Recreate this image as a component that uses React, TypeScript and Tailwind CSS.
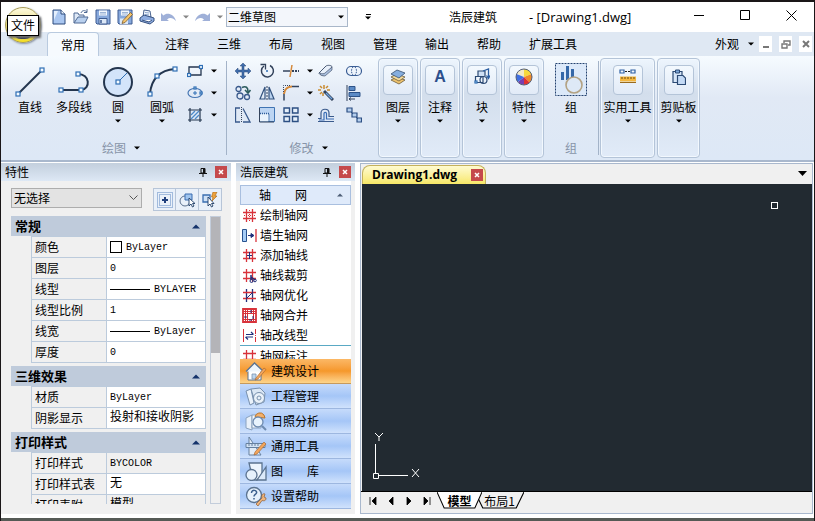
import type { ReactNode } from 'react';
import clsx from 'clsx';

const NAVY = '#24364f';
const BLUE = '#2f6fb5';

const ribbonTabs = ['常用', '插入', '注释', '三维', '布局', '视图', '管理', '输出', '帮助'];

type Row = { name: string; value: string; kind?: 'line' | 'swatch'; readOnly?: boolean };

const sections: { title: string; rows: Row[] }[] = [
  {
    title: '常规',
    rows: [
      { name: '颜色', value: 'ByLayer', kind: 'swatch' },
      { name: '图层', value: '0' },
      { name: '线型', value: 'BYLAYER', kind: 'line' },
      { name: '线型比例', value: '1' },
      { name: '线宽', value: 'ByLayer', kind: 'line' },
      { name: '厚度', value: '0' },
    ],
  },
  {
    title: '三维效果',
    rows: [
      { name: '材质', value: 'ByLayer' },
      { name: '阴影显示', value: '投射和接收阴影' },
    ],
  },
  {
    title: '打印样式',
    rows: [
      { name: '打印样式', value: 'BYCOLOR', readOnly: true },
      { name: '打印样式表', value: '无' },
      { name: '打印表附', value: '模型', readOnly: true },
    ],
  },
];

function Caret({ className }: { className?: string }) {
  return (
    <svg width="6" height="4" viewBox="0 0 6 4" className={clsx('shrink-0', className)} aria-hidden="true">
      <path d="M0 0.5h6L3 3.5z" fill="currentColor" />
    </svg>
  );
}

function Svg({ w = 16, h = 16, children }: { w?: number; h?: number; children: ReactNode }) {
  return (
    <svg width={w} height={h} viewBox={`0 0 ${w} ${h}`} fill="none" className="shrink-0" aria-hidden="true">
      {children}
    </svg>
  );
}

// grip square used on the ends of the draw icons
function Grip({ x, y, s = 4 }: { x: number; y: number; s?: number }) {
  return <rect x={x - s / 2} y={y - s / 2} width={s} height={s} fill="#f4fbff" stroke={BLUE} strokeWidth="1.2" />;
}

/* ---------- quick access ---------- */

const quickIcons = [
  {
    label: '新建',
    icon: (
      <Svg>
        <path d="M2 1h8l4 4v10H2z" fill="#a9c6f0" stroke="#2c4a7c" />
        <path d="M3 2h4L3 11z" fill="#e4effc" />
        <path d="M10 1v4h4" fill="#eaf3fd" stroke="#2c4a7c" />
      </Svg>
    ),
  },
  {
    label: '打开',
    icon: (
      <Svg>
        <path d="M1 14V4h4l1 2h5v2" fill="#dfe9f6" stroke="#516b94" />
        <path d="M1 14l4-6h10l-3 6z" fill="#b9d0ee" stroke="#516b94" />
        <path d="M8 4c1-3 4-3 6-1M14 0v3.5h-3" stroke="#516b94" />
      </Svg>
    ),
  },
  {
    label: '保存',
    icon: (
      <Svg>
        <path d="M1 1h14v14H2l-1-1z" fill="#88a9dc" stroke="#3d5b91" />
        <path d="M4 1.5h8v5H4z" fill="#f2f7fd" />
        <path d="M5 3.5h6M5 5h6" stroke="#9db4d6" />
        <path d="M4 9.5h8V15H4z" fill="#dce8f7" stroke="#3d5b91" />
        <path d="M6 11v3" stroke="#3d5b91" strokeWidth="1.5" />
      </Svg>
    ),
  },
  {
    label: '另存为',
    icon: (
      <Svg>
        <path d="M1 1h14v14H2l-1-1z" fill="#88a9dc" stroke="#3d5b91" />
        <path d="M4 1.5h8v5H4z" fill="#f2f7fd" />
        <path d="M5 3.5h6M5 5h6" stroke="#9db4d6" />
        <path d="M3 9.5h8V15H3z" fill="#dce8f7" />
        <path d="M6 11.5l7.5-8 2 2-7.5 8-3 1z" fill="#f5c46a" stroke="#7b5a2a" strokeWidth=".8" />
      </Svg>
    ),
  },
  {
    label: '打印',
    icon: (
      <Svg>
        <path d="M5 1l6 1 1 6H4z" fill="#f6faff" stroke="#48628f" />
        <path d="M6 3.5l4 .5M6 5.5l4 .5" stroke="#8aa4cc" />
        <path d="M1 9l4-3 10 3v3l-4 3-10-3z" fill="#8fade0" stroke="#35507f" />
        <path d="M3 11l7 2 3-2" fill="#fff" stroke="#35507f" />
      </Svg>
    ),
  },
];

function Undo({ flip }: { flip?: boolean }) {
  return (
    <Svg w={15} h={12}>
      <path
        d={flip ? 'M15 10V2l-2.5 2.5C9 1 2 3 0 10c3-3 6-4 9-1.5L7 10z' : 'M0 10V2l2.5 2.5C6 1 13 3 15 10c-3-3-6-4-9-1.5L8 10z'}
        fill="#9fb0d8"
      />
    </Svg>
  );
}

function TitleBar() {
  return (
    <header className="flex h-8 shrink-0 items-center border-t-2 border-[#1a1618] bg-white pl-[50px]">
      <div className="flex items-center gap-[6px]">
        {quickIcons.map((q) => (
          <button key={q.label} aria-label={q.label} className="flex w-4">
            {q.icon}
          </button>
        ))}
        <button aria-label="撤销" className="flex items-center gap-[7px] text-[#868686]">
          <Undo />
          <Caret />
        </button>
        <button aria-label="重做" className="flex items-center gap-[7px] text-[#868686]">
          <Undo flip />
          <Caret />
        </button>
      </div>
      <div className="relative ml-[3px] w-[122px]">
        <select
          aria-label="工作空间"
          className="block h-5 w-full appearance-none border border-[#a9b7c9] bg-[#f3f6fb] px-px text-[12px] leading-4"
        >
          <option>二维草图</option>
        </select>
        <Caret className="pointer-events-none absolute top-2 right-1" />
      </div>
      <button aria-label="自定义" className="ml-4 flex w-2 flex-col items-center gap-px">
        <span className="h-px w-[5px] bg-black" />
        <Caret />
      </button>
      <h1 className="ml-[77px] flex flex-1 items-center gap-8 text-[12px] whitespace-nowrap">
        <span>浩辰建筑</span>
        <span className="font-['Open_Sans','Noto_Sans_CJK_SC',sans-serif] text-[13px] leading-4">- [Drawing1.dwg]</span>
      </h1>
      <div className="flex h-[26px] self-start">
        <button aria-label="最小化" className="flex w-[46px] items-center justify-center">
          <Svg w={11} h={11}><path d="M0 5.5h10" stroke="#000" /></Svg>
        </button>
        <button aria-label="最大化" className="flex w-[46px] items-center justify-center">
          <Svg w={11} h={11}><path d="M.5.5h9v9h-9z" stroke="#000" /></Svg>
        </button>
        <button aria-label="关闭" className="flex w-[46px] items-center justify-center">
          <Svg w={11} h={11}><path d="M.5.5l10 10M10.5.5l-10 10" stroke="#000" /></Svg>
        </button>
      </div>
    </header>
  );
}

function TabBar() {
  return (
    <nav className="flex h-6 shrink-0 items-center bg-[#dfe8f3] pr-[2px] pl-[46px] text-[12px] leading-6">
      {ribbonTabs.map((t, i) => (
        <button
          key={t}
          className={clsx(
            'h-6 w-[52px] shrink-0',
            i === 0 && 'rounded-t border border-b-0 border-[#b9cadf] bg-[#f6fafe]',
          )}
        >
          {t}
        </button>
      ))}
      <button className="ml-[14px]">扩展工具</button>
      <button className="mr-1 ml-auto flex items-center gap-[9px]">
        外观
        <Caret />
      </button>
      <div className="ml-px flex gap-[7px]">
        <button aria-label="最小化图形" className="flex h-4 w-[13px] items-center justify-center bg-white">
          <Svg w={8} h={8}><path d="M1 7h6" stroke="#777" strokeWidth="2" /></Svg>
        </button>
        <button aria-label="还原图形" className="flex h-4 w-[13px] items-center justify-center bg-white">
          <Svg w={10} h={9}><path d="M3 3V1h6v4H7M1 4h5v4H1z" stroke="#777" strokeWidth="1.4" /></Svg>
        </button>
        <button aria-label="关闭图形" className="flex h-4 w-[13px] items-center justify-center bg-white">
          <Svg w={8} h={8}><path d="M1 1l6 6M7 1L1 7" stroke="#777" strokeWidth="2" /></Svg>
        </button>
      </div>
    </nav>
  );
}

/* ---------- ribbon ---------- */

function BigButton({ label, caret, children }: { label: string; caret?: boolean; children: ReactNode }) {
  return (
    <button className="flex w-11 flex-col items-center">
      <span className="flex h-[35px] items-center">{children}</span>
      <span className="leading-4 whitespace-nowrap">{label}</span>
      {caret && <Caret className="mt-1" />}
    </button>
  );
}

function GroupTitle({ children, caret }: { children: string; caret?: boolean }) {
  return (
    <div className="mt-auto mb-1 flex h-4 items-center justify-center gap-2 leading-4">
      <span className="text-[#8794a8]">{children}</span>
      {caret && <Caret />}
    </div>
  );
}

function SmallButton({ label, caret, children }: { label: string; caret?: boolean; children: ReactNode }) {
  return (
    <button aria-label={label} className="flex h-[22px] items-center gap-2">
      {children}
      {caret && <Caret />}
    </button>
  );
}

function DrawGroup() {
  return (
    <section className="flex w-[225px] shrink-0 flex-col pt-1 pl-[7px]">
      <div className="flex">
        <div className="flex pt-1">
          <BigButton label="直线">
            <Svg w={32} h={32}>
              <path d="M4 28L28 4" stroke={NAVY} strokeWidth="2" />
              <Grip x={4} y={28} />
              <Grip x={28} y={4} />
            </Svg>
          </BigButton>
          <BigButton label="多段线">
            <Svg w={34} h={32}>
              <path d="M4 24h20c10-1 9-16-3-16" stroke={NAVY} strokeWidth="2" />
              <Grip x={4} y={24} />
              <Grip x={24} y={24} />
              <Grip x={21} y={8} />
            </Svg>
          </BigButton>
          <BigButton label="圆" caret>
            <Svg w={32} h={32}>
              <circle cx="16" cy="16" r="14" fill="#d3e4fa" stroke={NAVY} strokeWidth="2" />
              <path d="M16 16l9-9" stroke={BLUE} />
              <Grip x={16} y={16} />
            </Svg>
          </BigButton>
          <BigButton label="圆弧" caret>
            <Svg w={32} h={32}>
              <path d="M4 28C5 13 14 4 29 3" stroke={NAVY} strokeWidth="2" />
              <Grip x={4} y={28} />
              <Grip x={11} y={10} />
              <Grip x={29} y={3} />
            </Svg>
          </BigButton>
        </div>
        <div className="flex flex-col pl-[3px]">
          <SmallButton label="矩形" caret>
            <Svg>
              <path d="M2 4h12v8H2z" stroke={NAVY} strokeWidth="1.3" />
              <Grip x={2} y={12} s={3} />
              <Grip x={14} y={4} s={3} />
            </Svg>
          </SmallButton>
          <SmallButton label="椭圆" caret>
            <Svg>
              <ellipse cx="8" cy="8" rx="7" ry="4.5" stroke="#4777b4" strokeWidth="1.2" />
              <path d="M8 6v4M6 8h4" stroke={BLUE} />
              <Grip x={8} y={3} s={2} />
              <Grip x={14} y={8} s={2} />
            </Svg>
          </SmallButton>
          <SmallButton label="图案填充" caret>
            <Svg>
              <path d="M3 1v14M13 1v14M1 3h14M1 13h14" stroke={NAVY} strokeWidth="1.2" />
              <path d="M4 8l4-4M4 12l8-8M8 12l4-4" stroke="#4b8ac9" strokeWidth="1.3" />
            </Svg>
          </SmallButton>
        </div>
      </div>
      <div className="mt-auto pl-2">
        <GroupTitle caret>绘图</GroupTitle>
      </div>
    </section>
  );
}

const modifyTools: { label: string; caret?: boolean; icon: ReactNode }[] = [
  {
    label: '移动',
    icon: (
      <path d="M8 0l3 3H9v4h4V5l3 3-3 3V9H9v4h2l-3 3-3-3h2V9H3v2L0 8l3-3v2h4V3H5z" fill="#3f6cab" stroke="#2b4a7a" strokeWidth=".5" />
    ),
  },
  {
    label: '旋转',
    icon: (
      <>
        <path d="M5 3a6 6 0 1 0 6-.5" stroke="#33435c" strokeWidth="1.5" />
        <path d="M1.5 1.5h5v5" stroke="#33435c" strokeWidth="1.3" />
        <path d="M8 7v2M7 8h2" stroke={BLUE} />
      </>
    ),
  },
  {
    label: '修剪',
    caret: true,
    icon: (
      <>
        <path d="M0 8h7" stroke="#33435c" strokeWidth="1.5" />
        <path d="M9 8h7" stroke="#33435c" strokeWidth="2" strokeDasharray="2 1" />
        <path d="M9 2L7 14" stroke="#d58a3c" strokeWidth="1.5" />
      </>
    ),
  },
  {
    label: '删除',
    icon: (
      <>
        <path d="M1 10l7-7c1-1 6-1 6 1l-7 8c-1 1-6 0-6-2z" fill="#e9f1fb" stroke="#4a5a74" />
        <path d="M2 10c2 1 4 1 5 0l7-6v3l-7 6c-3 0-5-1-5-3z" fill="#a9bedd" stroke="#4a5a74" strokeWidth=".7" />
      </>
    ),
  },
  {
    label: '合并',
    icon: (
      <>
        <rect x=".5" y="3.5" width="15" height="9" rx="4.5" stroke="#3b5e95" strokeWidth="1.2" />
        <path d="M7 4c-2 2-2 6 0 8M9 4c2 2 2 6 0 8" stroke="#3b5e95" strokeDasharray="1.5 1" />
      </>
    ),
  },
  {
    label: '复制',
    icon: (
      <>
        <circle cx="3.5" cy="4" r="2.5" stroke="#3a5a8c" strokeWidth="1.3" />
        <circle cx="5" cy="11" r="3" stroke="#3a5a8c" strokeWidth="1.3" />
        <circle cx="12" cy="12" r="2.5" stroke="#3a5a8c" strokeWidth="1.3" />
        <path d="M7 2.5c4-2 6 0 6 4M10 5l3 3 2.5-3" stroke="#2b5a5c" strokeWidth="1.6" />
      </>
    ),
  },
  {
    label: '镜像',
    icon: (
      <>
        <path d="M6 2v12H1z" stroke="#33537f" strokeWidth="1.2" />
        <path d="M10 2v12h5z" fill="#b9d2ef" stroke="#33537f" strokeWidth="1.2" />
        <path d="M8 1v14" stroke="#33435c" strokeDasharray="2 1" />
      </>
    ),
  },
  {
    label: '圆角',
    caret: true,
    icon: (
      <>
        <path d="M1 15.5V8M9 1.5h7" stroke="#33435c" strokeWidth="1.5" />
        <path d="M1 9C1.5 4 5 1.5 9 1.5" stroke="#d58a3c" strokeWidth="2" />
        <path d="M.5 7V.5H8" stroke="#33435c" strokeDasharray="1 1" />
      </>
    ),
  },
  {
    label: '分解',
    icon: (
      <>
        <path d="M6 0v4M0 5h3M2 1l2 2M10 1L8 3M2 9l2-2M5 8v3M9 5h3" stroke="#c98a2e" strokeWidth="1.5" />
        <path d="M6 6l9 9" stroke="#33435c" strokeWidth="3" />
        <path d="M8 8l6 6" stroke="#6fa3dd" strokeWidth="1.3" />
      </>
    ),
  },
  {
    label: '对齐',
    icon: (
      <>
        <path d="M1 0v16" stroke="#33435c" />
        <path d="M3 1.5h6v4H3zM3 7.5h11v4H3z" fill="#5c8bc6" stroke="#2d5288" />
        <path d="M3 14h6M5 12.5L3 14l2 1.5" stroke="#33435c" />
      </>
    ),
  },
  {
    label: '拉伸',
    icon: (
      <>
        <path d="M5 1H.5v14H5M8 1.5l7 13.5H8" stroke="#3a5a8c" strokeWidth="1.3" />
        <path d="M6.5 0v16" stroke="#33435c" strokeDasharray="1 1" />
      </>
    ),
  },
  {
    label: '缩放',
    icon: (
      <>
        <path d="M.5.5h15v14H.5z" stroke="#3f74b3" fill="#bcd5f3" />
        <path d="M1 7h8.5v7.5H1z" fill="#e9f3fd" />
        <path d="M1 6.5h9V15" stroke="#2f5c99" strokeWidth="1.3" strokeDasharray="1 1" />
        <path d="M.5 1v14H15" stroke="#33435c" />
      </>
    ),
  },
  {
    label: '阵列',
    caret: true,
    icon: <path d="M1 1h5.5v5H1zM9.5 1H15v5H9.5zM1 9.5h5.5v5H1zM9.5 9.5H15v5H9.5z" fill="#e6f0fb" stroke="#2c4f83" strokeWidth="1.4" />,
  },
  {
    label: '偏移',
    icon: (
      <>
        <path d="M0 14.5h16M0 11.5h3V6c0-5 8-5 8 0v3.5h5" stroke="#3a5a8c" strokeWidth="1.2" />
        <path d="M1 13h5V6.5c0-1.5 2.5-1.5 2.5 0V12H16" stroke="#3a6db5" strokeWidth="1.2" />
      </>
    ),
  },
  {
    label: '拉长',
    icon: (
      <>
        <path d="M1 1h5v4H1zM6 6h5v4H6zM11 11h4.5v4H11z" fill="#b5cfee" stroke="#2c4f83" strokeWidth="1.2" />
        <path d="M5 5l2 2M10 10l2 2" stroke="#2c4f83" />
      </>
    ),
  },
];

function ModifyGroup() {
  return (
    <section className="flex w-[151px] shrink-0 flex-col pt-1">
      <div className="grid grid-cols-[24px_24px_35px_28px_18px] pl-2">
        {modifyTools.map((m) => (
          <SmallButton key={m.label} label={m.label} caret={m.caret}>
            <Svg>{m.icon}</Svg>
          </SmallButton>
        ))}
      </div>
      <div className="mt-auto pl-3">
        <GroupTitle caret>修改</GroupTitle>
      </div>
    </section>
  );
}

function CollapsedGroup({ label, width, children }: { label: string; width: string; children: ReactNode }) {
  return (
    <button
      className={clsx(
        'my-[2px] flex shrink-0 flex-col items-center rounded border border-[#b4c4d8] bg-gradient-to-b from-[#edf5fd] via-[#d3deec] via-35% to-[#e1ebf8] pt-[6px] shadow-[inset_0_0_0_1px_#f2f8fe]',
        width,
      )}
    >
      <span className="flex h-[30px] w-[30px] items-start justify-center rounded-sm border border-[#b4c4d8] bg-gradient-to-b from-[#f3f9fe] to-[#e2ebf7] pt-[2px]">
        {children}
      </span>
      <span className="mt-1 leading-4 whitespace-nowrap">{label}</span>
      <Caret className="mt-1" />
    </button>
  );
}

function Separator() {
  return <div className="my-[5px] w-px shrink-0 bg-[#a3b3c8]" />;
}

function Ribbon() {
  return (
    <div className="flex h-[106px] shrink-0 border-b-2 border-[#a9b8cd] bg-gradient-to-b from-[#f6fbff] via-[#e1e9f5] via-40% to-[#dde8f6] text-[12px]">
      <DrawGroup />
      <Separator />
      <ModifyGroup />
      <div className="flex gap-[2px]">
        <CollapsedGroup label="图层" width="w-10">
          <Svg w={16} h={18}>
            <path d="M1 12l6-3 8 3-6 4z" fill="#f0c46e" stroke="#6a5a3a" strokeWidth=".8" />
            <path d="M1 9l6-3 8 3-6 4z" fill="#f7dc9c" stroke="#6a5a3a" strokeWidth=".8" />
            <path d="M1 6l6-4 8 3-6 5z" fill="#86aede" stroke="#38506f" strokeWidth=".8" />
          </Svg>
        </CollapsedGroup>
        <CollapsedGroup label="注释" width="w-10">
          <span className="font-['Liberation_Sans',sans-serif] text-[16px] leading-[18px] font-bold text-[#2c4f8c]">A</span>
        </CollapsedGroup>
        <CollapsedGroup label="块" width="w-10">
          <Svg w={16} h={18}>
            <path d="M4 9V3h7v5" fill="#cfe0f5" stroke="#2c4a74" strokeWidth="1.2" />
            <path d="M1.5 8.5H9v6H1.5z" fill="#eef5fd" stroke="#2c4a74" strokeWidth="1.2" />
            <circle cx="9.5" cy="12" r="3.5" stroke="#2c4a74" strokeWidth="1.2" />
            <path d="M9 3l5.5-2v9M12.5 7.5l2 3 1.5-3" stroke="#2d5fa3" strokeWidth="1.3" />
            <Grip x={2} y={14} s={2} />
          </Svg>
        </CollapsedGroup>
        <CollapsedGroup label="特性" width="w-10">
          <Svg w={18} h={18}>
            <circle cx="9" cy="9" r="8" fill="#fff" />
            <path d="M9 9L1.5 6A8 8 0 0 1 9 1z" fill="#f4e9c8" />
            <path d="M9 9V1a8 8 0 0 1 7.5 5z" fill="#f7d93d" />
            <path d="M9 9l7.5-3a8 8 0 0 1-1.8 8.5z" fill="#f08a2a" />
            <path d="M9 9l5.7 5.5A8 8 0 0 1 9 17z" fill="#e2322f" />
            <path d="M9 9v8a8 8 0 0 1-6-3z" fill="#7a3fb0" />
            <path d="M9 9l-6 5a8 8 0 0 1-1.5-8z" fill="#3f6fe0" />
            <circle cx="9" cy="9" r="8" stroke="#55607a" />
          </Svg>
        </CollapsedGroup>
      </div>
      <section className="flex w-[54px] shrink-0 flex-col pt-[7px]">
        <button className="flex flex-col items-center">
          <Svg w={32} h={33}>
            <path d="M.5.5h31v32H.5z" fill="#dce9f9" stroke="#24426f" strokeDasharray="2 1" />
            <path d="M6 9h3v8H6zM11 3h3v14h-3zM16 6h3v8h-3z" fill="#3568a8" />
            <circle cx="19" cy="22" r="8" fill="#dfe9f4" fillOpacity=".6" stroke="#b3a283" strokeWidth="1.6" />
          </Svg>
          <span className="mt-[3px] leading-4">组</span>
        </button>
        <GroupTitle>组</GroupTitle>
      </section>
      <Separator />
      <div className="ml-px flex gap-[2px]">
        <CollapsedGroup label="实用工具" width="w-[55px]">
          <Svg w={18} h={16}>
            <path d="M1 2h4v3H1zM12 2h4v3h-4z" stroke="#2d5fa3" strokeWidth="1.2" />
            <path d="M6 3.5h5" stroke="#222" strokeDasharray="2 1" />
            <path d="M1 8.5h16v5H1z" fill="#f3b63f" />
            <path d="M1 14.5h16" stroke="#9a6b1d" />
            <path d="M3 9v2M6 9v2M9 9v2M12 9v2M15 9v2" stroke="#6b4a12" />
          </Svg>
        </CollapsedGroup>
        <CollapsedGroup label="剪贴板" width="w-[43px]">
          <Svg w={14} h={18}>
            <path d="M1 3.5h9v11H1z" fill="#d7e6f8" stroke="#2c4a74" strokeWidth="1.2" />
            <path d="M3.5 2h4v3h-4z" fill="#7fa8da" stroke="#2c4a74" />
            <path d="M5.5 7.5H11l2.5 2.5v6.5h-8z" fill="#c4daf5" stroke="#2c4a74" strokeWidth="1.2" />
          </Svg>
        </CollapsedGroup>
      </div>
    </div>
  );
}

/* ---------- palettes ---------- */

function CloseBox() {
  return (
    <Svg w={12} h={12}>
      <path d="M0 0h12v12H0z" fill="#c5494b" />
      <path d="M4 4l4 4M8 4L4 8" stroke="#fff" strokeWidth="1.5" />
    </Svg>
  );
}

function PaletteHeader({ title }: { title: string }) {
  return (
    <div className="flex h-[18px] shrink-0 items-center bg-gradient-to-b from-[#c3cfdd] to-[#dde8f5] px-1 text-[12px] leading-[18px]">
      <h2 className="flex-1">{title}</h2>
      <button aria-label="固定" className="mr-2">
        <Svg w={8} h={9}>
          <path d="M2 0.5h4V5H2zM0 5.5h8M4 6v3" stroke="#111" />
          <path d="M5 0v5" stroke="#111" strokeWidth="2" />
        </Svg>
      </button>
      <button aria-label="关闭">
        <CloseBox />
      </button>
    </div>
  );
}

function ValueCell({ row }: { row: Row }) {
  const latin = /^[\x20-\x7e]+$/.test(row.value);
  return (
    <div className="flex h-5 items-center overflow-hidden font-['Liberation_Mono','Noto_Sans_CJK_SC',monospace] leading-[18px] whitespace-nowrap">
      {row.kind === 'swatch' && <span className="mr-1 h-3 w-3 shrink-0 border border-black bg-white" />}
      {row.kind === 'line' && <span className="mr-1 h-px w-10 shrink-0 bg-black" />}
      <span className={latin ? 'pt-px text-[10px]' : 'text-[12px]'}>{row.value}</span>
    </div>
  );
}

function PropertiesPalette() {
  return (
    <aside className="flex w-[230px] shrink-0 flex-col bg-[#f0f0f0]">
      <PaletteHeader title="特性" />
      <div className="flex justify-between pt-[7px] pr-[9px] pl-[10px]">
        <div className="relative h-5 w-[131px]">
          <select
            aria-label="选择对象"
            className="block h-5 w-full appearance-none border border-[#adadad] bg-[#e3e3e3] px-[2px] text-[12px] leading-4"
          >
            <option>无选择</option>
          </select>
          <svg width="9" height="6" viewBox="0 0 9 6" fill="none" className="pointer-events-none absolute top-[7px] right-1">
            <path d="M.5.5l4 4 4-4" stroke="#555" />
          </svg>
        </div>
        <div className="flex h-[23px] divide-x divide-[#b7c5d8] border border-[#b7c5d8] bg-[#e9f0f9]">
          <button aria-label="切换 PICKADD" className="flex w-[22px] items-center justify-center">
            <Svg>
              <path d="M.5.5h15v15H.5zM2.5 2.5h11v11h-11z" stroke="#5a86c0" strokeDasharray="1 1" />
              <path d="M8 5v6M5 8h6" stroke="#1f3f7d" strokeWidth="2" />
            </Svg>
          </button>
          <button aria-label="选择对象" className="flex w-[23px] items-center justify-center">
            <Svg w={17}>
              <circle cx="6" cy="9" r="5" stroke="#5a6f8c" />
              <path d="M6 2h7v6H6z" fill="#9fc4ee" stroke="#3a6db0" />
              <path d="M10 6v8l2-2 1.5 3 1.5-1-1.5-2.5H16z" fill="#fff" stroke="#1d3c66" strokeWidth=".9" />
            </Svg>
          </button>
          <button aria-label="快速选择" className="flex w-[22px] items-center justify-center">
            <Svg>
              <path d="M1 3h7v7H1z" fill="#cfe1f6" stroke="#3a6db0" strokeWidth="1.3" />
              <path d="M6 5v9l2-2 1.5 3 1.5-1-1.5-2.5H12z" fill="#fff" stroke="#1d3c66" strokeWidth=".9" />
              <path d="M11 0h4l-2 4h2l-5 5 1-4H9.5z" fill="#efa23b" stroke="#a4661a" strokeWidth=".6" />
            </Svg>
          </button>
        </div>
      </div>
      <div className="mx-[10px] mt-[5px] mb-[10px] flex min-h-0 flex-1 gap-1">
        <div className="min-h-0 flex-1 overflow-hidden">
          {sections.map((s) => (
            <section key={s.title} className="mb-[3px]">
              <button className="flex h-5 w-full items-center bg-[#bfcbdb] px-1 text-[13px] font-bold">
                {s.title}
                <svg width="8" height="5" viewBox="0 0 8 5" className="mr-[2px] ml-auto" aria-hidden="true">
                  <path d="M0 4.5h8L4 .5z" fill="#14336b" />
                </svg>
              </button>
              <table className="ml-5 w-[175px] table-fixed border-collapse text-[12px]">
                <tbody>
                  {s.rows.map((r) => (
                    <tr key={r.name} className="h-[21px]">
                      <th scope="row" className="w-[75px] border border-[#bccbdc] py-0 pr-0 pl-[3px] text-left leading-5 font-normal whitespace-nowrap">
                        {r.name}
                      </th>
                      <td className={clsx('border border-[#bccbdc] py-0 pr-0 pl-[3px]', !r.readOnly && 'bg-white')}>
                        <ValueCell row={r} />
                      </td>
                    </tr>
                  ))}
                </tbody>
              </table>
            </section>
          ))}
        </div>
        <div className="w-[11px] border border-[#c3cddb] bg-[#f0f0f0]">
          <div className="h-[136px] bg-[#b4b4b8]" />
        </div>
      </div>
    </aside>
  );
}

const RED = '#d8323a';
const INK = '#20307c';
const hash = <path d="M4.5 1v13M10.5 1v13M1 4.5h13M1 10.5h13" stroke={RED} strokeWidth="1.3" />;

const axisTools = [
  { label: '绘制轴网', icon: <>{hash}<path d="M7.5 2v11M2 7.5h11" stroke={RED} strokeDasharray="1 1" /></> },
  {
    label: '墙生轴网',
    icon: (
      <>
        <path d="M.5 1.5h4v12h-4z" fill="#a7cdf6" stroke="#28528f" />
        <path d="M6 7.5h4M9 5.5l3 2-3 2z" fill={INK} stroke={INK} />
        <path d="M14 1v13" stroke={RED} strokeWidth="1.3" />
      </>
    ),
  },
  { label: '添加轴线', icon: <>{hash}<path d="M7.5 4v7M5 7.5h5" stroke={INK} /></> },
  {
    label: '轴线裁剪',
    icon: (
      <>
        {hash}
        <path d="M9 7v5M9 9l4 3" stroke={INK} strokeWidth="1.5" />
        <circle cx="9.5" cy="13" r="1.5" stroke={INK} />
        <circle cx="13" cy="12.5" r="1.3" stroke={INK} />
      </>
    ),
  },
  {
    label: '轴网优化',
    icon: (
      <>
        <path d="M4.5 1v13M10.5 1v13" stroke={INK} strokeWidth="1.3" />
        <path d="M1 4.5h13M1 10.5h13" stroke={RED} strokeWidth="1.3" />
        <path d="M4 11l7-7" stroke={INK} />
      </>
    ),
  },
  {
    label: '轴网合并',
    icon: (
      <>
        <path d="M1 1h13v13H1z" fill="#fff" stroke={RED} strokeWidth="1.8" />
        <path d="M3.5 1v13M5.5 1v13M11.5 1v13M1 3.5h13M1 5.5h13M1 11.5h13M9.5 1v4M9.5 11v3" stroke={RED} />
        <path d="M6 6h4v5H6z" fill="#fff" />
        <path d="M9 2v3M2 9h3M11 8v3M7 12h3" stroke={INK} />
      </>
    ),
  },
  {
    label: '轴改线型',
    icon: (
      <>
        <path d="M1.5 1v13" stroke={RED} />
        <path d="M13.5 1v13" stroke={RED} strokeDasharray="5 1 1 1" />
        <path d="M4 6.5h7M9 4l2.5 2.5M4 9h7M6 11.5L3.5 9" stroke={INK} strokeWidth="1.2" />
      </>
    ),
  },
];

const categories = [
  {
    label: '建筑设计',
    icon: (
      <>
        <path d="M3 10v9h13v-9" fill="#fff" stroke="#5b7390" />
        <path d="M1 10.5L9.5 2l9 8.5" fill="#eef5fc" stroke="#5b7390" strokeWidth="1.3" />
        <path d="M7 13h4v5H7z" fill="#bcd6ee" stroke="#7b93ad" strokeWidth=".8" />
        <path d="M11 17l8-10 2 1.5L13 18l-3 1z" fill="#f2a55c" stroke="#a2622a" strokeWidth=".6" />
      </>
    ),
  },
  {
    label: '工程管理',
    icon: (
      <>
        <path d="M1 5l5-2 3 14-4 2z" fill="#eaf2fb" stroke="#7890ad" />
        <path d="M6 3l9-1 5 5-1 9-8 3z" fill="#dbe7f4" stroke="#7890ad" />
        <circle cx="14" cy="12" r="5.5" fill="#e9f1f9" stroke="#7890ad" />
        <circle cx="14" cy="12" r="2" stroke="#7890ad" />
      </>
    ),
  },
  {
    label: '日照分析',
    icon: (
      <>
        <path d="M1 7l6-3v15l-6-2z" fill="#e9f1fa" stroke="#8aa2bf" />
        <path d="M7 4h9v13H7z" fill="#f5f9fd" stroke="#8aa2bf" />
        <path d="M10 6a5 5 0 0 1 9-2l1 3z" fill="#f4b06a" stroke="#b9772f" />
        <circle cx="13" cy="11" r="5" fill="#e8f3fd" stroke="#6e8bb0" strokeWidth="1.3" />
        <path d="M17 15l4 4" stroke="#6e8bb0" strokeWidth="2" />
      </>
    ),
  },
  {
    label: '通用工具',
    icon: (
      <>
        <path d="M4 1v18h12z" fill="#e2ecf7" stroke="#66809f" />
        <path d="M1 7.5h19v4H1z" fill="#d3e3f4" stroke="#66809f" />
        <path d="M4 8v2M7 8v2M10 8v2M13 8v2" stroke="#66809f" />
        <path d="M10 16l9-10 2 2-9 10-3 1z" fill="#f2a55c" stroke="#a2622a" strokeWidth=".6" />
      </>
    ),
  },
  {
    label: '图　　库',
    icon: (
      <>
        <path d="M4 2h13v12l-5 5H8z" fill="#edf5fd" stroke="#5b7390" strokeWidth="1.3" />
        <path d="M12 19h9V6z" fill="#dceafa" stroke="#5b7390" strokeWidth="1.3" />
        <circle cx="6.5" cy="14" r="5.5" fill="#e6f1fc" stroke="#5b7390" strokeWidth="1.3" />
      </>
    ),
  },
  {
    label: '设置帮助',
    icon: (
      <>
        <circle cx="9" cy="9" r="7.5" fill="#e6f1fc" stroke="#5b7390" strokeWidth="1.3" />
        <path d="M6.5 7c0-4 6-3 5 0-.5 1.5-2.5 1.5-2.5 3.5M9 12v1.5" stroke="#3d618f" strokeWidth="1.5" />
        <path d="M11 18l6-6c-1-3 1-5 3-4l-1 3 2 1c0 3-2 3-4 2.5L13 20z" fill="#f0b57c" stroke="#8d5b32" strokeWidth=".7" />
      </>
    ),
  },
];

function ArchPalette() {
  return (
    <aside className="flex w-[119px] shrink-0 flex-col bg-[#f0f0f0] text-[12px]">
      <PaletteHeader title="浩辰建筑" />
      <div className="mx-1 mb-[5px] flex min-h-0 flex-1 flex-col bg-white pt-1">
        <button className="flex h-5 shrink-0 items-center border border-[#a9bfdf] bg-[#dfeafa] pr-[7px] pl-[18px]">
          轴　　网
          <svg width="6" height="4" viewBox="0 0 6 4" className="ml-auto" aria-hidden="true">
            <path d="M0 3.5h6L3 .5z" fill="#4d5d75" />
          </svg>
        </button>
        <ul className="min-h-0 flex-1 overflow-hidden">
          {axisTools.map((t) => (
            <li key={t.label}>
              <button className="flex h-5 items-center gap-[3px] pl-[2px]">
                <Svg w={15} h={15}>{t.icon}</Svg>
                {t.label}
              </button>
            </li>
          ))}
          <li className="border-t border-[#5aa9c4]">
            <button className="flex h-5 items-center gap-[3px] pl-[2px]">
              <Svg w={15} h={15}>{hash}</Svg>
              轴网标注
            </button>
          </li>
        </ul>
        <div className="shrink-0">
          {categories.map((c, i) => (
            <button
              key={c.label}
              className={clsx(
                'flex h-[25px] w-full items-center gap-1 border-b pl-[5px]',
                i === 0
                  ? 'border-[#c79a5c] bg-gradient-to-b from-[#fbb865] via-[#f5982a] to-[#fdd58a]'
                  : 'border-[#9db7e0] bg-gradient-to-b from-[#c6dbfb] via-[#a5c6f7] to-[#d0e2fc]',
              )}
            >
              <Svg w={22} h={20}>{c.icon}</Svg>
              {c.label}
            </button>
          ))}
        </div>
      </div>
    </aside>
  );
}

/* ---------- drawing area ---------- */

const navGlyphs = [
  { label: '第一个', d: 'M1 0v8M3 4l4-4v8z' },
  { label: '上一个', d: 'M2 4l4-4v8z' },
  { label: '下一个', d: 'M6 4L2 0v8z' },
  { label: '最后一个', d: 'M5 4L1 0v8zM7 0v8' },
];

function SheetTab({ label, active, className }: { label: string; active?: boolean; className: string }) {
  return (
    <button className={clsx('relative flex h-[17px] items-center justify-center', active && 'z-10 font-bold', className)}>
      <svg viewBox="0 0 44 17" preserveAspectRatio="none" className="absolute inset-0 h-full w-full" aria-hidden="true">
        <path d="M0 0l7 16h30L44 0" fill={active ? '#fff' : '#f0f0f0'} stroke="#000" />
      </svg>
      <span className="relative leading-4">{label}</span>
    </button>
  );
}

function DrawingArea() {
  return (
    <main className="flex min-w-0 flex-1 flex-col border border-[#a9b8cd] bg-[#f0f0f0] text-[12px]">
      <div className="flex h-5 shrink-0 items-end pl-px">
        <div className="flex h-[19px] items-center gap-[14px] rounded-t-lg border border-b-0 border-[#c4b25c] bg-gradient-to-b from-[#fffbd0] to-[#f7e765] pr-[2px] pl-[9px]">
          <span className="font-['Open_Sans','Noto_Sans_CJK_SC',sans-serif] text-[12px] leading-4 font-bold">Drawing1.dwg</span>
          <button aria-label="关闭">
            <CloseBox />
          </button>
        </div>
        <button aria-label="图形列表" className="mr-[5px] mb-2 ml-auto">
          <svg width="9" height="5" viewBox="0 0 9 5"><path d="M0 0h9L4.5 5z" /></svg>
        </button>
      </div>
      <div className="relative ml-px min-h-0 flex-1 bg-[#222a31]">
        <span className="absolute top-[18px] right-[34px] h-[7px] w-[7px] border border-white" />
        <svg width="50" height="50" viewBox="0 0 50 50" fill="none" stroke="#fff" className="absolute bottom-3 left-2" aria-label="UCS">
          <path d="M3.5 44.5h5v5h-5zM5.5 44V15M9 46.5h29" />
          <path d="M5 4l4 4 4-4M9 8v4M42 40l7 8M49 40l-7 8" />
        </svg>
      </div>
      <div className="flex h-[22px] shrink-0 items-start border-t border-black pr-1 pl-2">
        <div className="flex gap-[10px] pt-[5px]">
          {navGlyphs.map((n) => (
            <button key={n.label} aria-label={n.label} className="flex">
              <svg width="8" height="8" viewBox="0 0 8 8" aria-hidden="true">
                <path d={n.d} fill="#000" stroke="#000" strokeWidth=".8" />
              </svg>
            </button>
          ))}
        </div>
        <SheetTab label="模型" active className="ml-[6px] w-[45px]" />
        <SheetTab label="布局1" className="-ml-[7px] w-[49px]" />
      </div>
    </main>
  );
}

export default function App() {
  return (
    <div className="relative flex h-screen flex-col overflow-hidden border-x border-[#1a1618] bg-white font-['Noto_Sans_CJK_SC',sans-serif] text-[12px] text-black">
      <TitleBar />
      <TabBar />
      {/* round application button, hangs over both bars */}
      <button className="absolute top-[7px] left-1 flex h-9 w-9 items-center justify-center rounded-full border border-[#a89c58] bg-gradient-to-b from-[#fffbe0] via-[#e9dc7c] to-[#f6e01c] shadow-[1px_1px_2px_#8a93a3]">
        <span className="absolute bottom-[3px] h-2 w-5 rounded-b-full bg-[#2b3350]" />
        <span className="relative flex h-[21px] w-8 shrink-0 items-center justify-center border border-black bg-white shadow-[2px_2px_2px_#6f6f6f]">
          文件
        </span>
      </button>
      <Ribbon />
      <div className="flex min-h-0 flex-1 gap-[5px] pt-px pr-px pb-1">
        <PropertiesPalette />
        <ArchPalette />
        <DrawingArea />
      </div>
      <footer className="h-[3px] shrink-0 bg-[#555a55]" />
    </div>
  );
}
